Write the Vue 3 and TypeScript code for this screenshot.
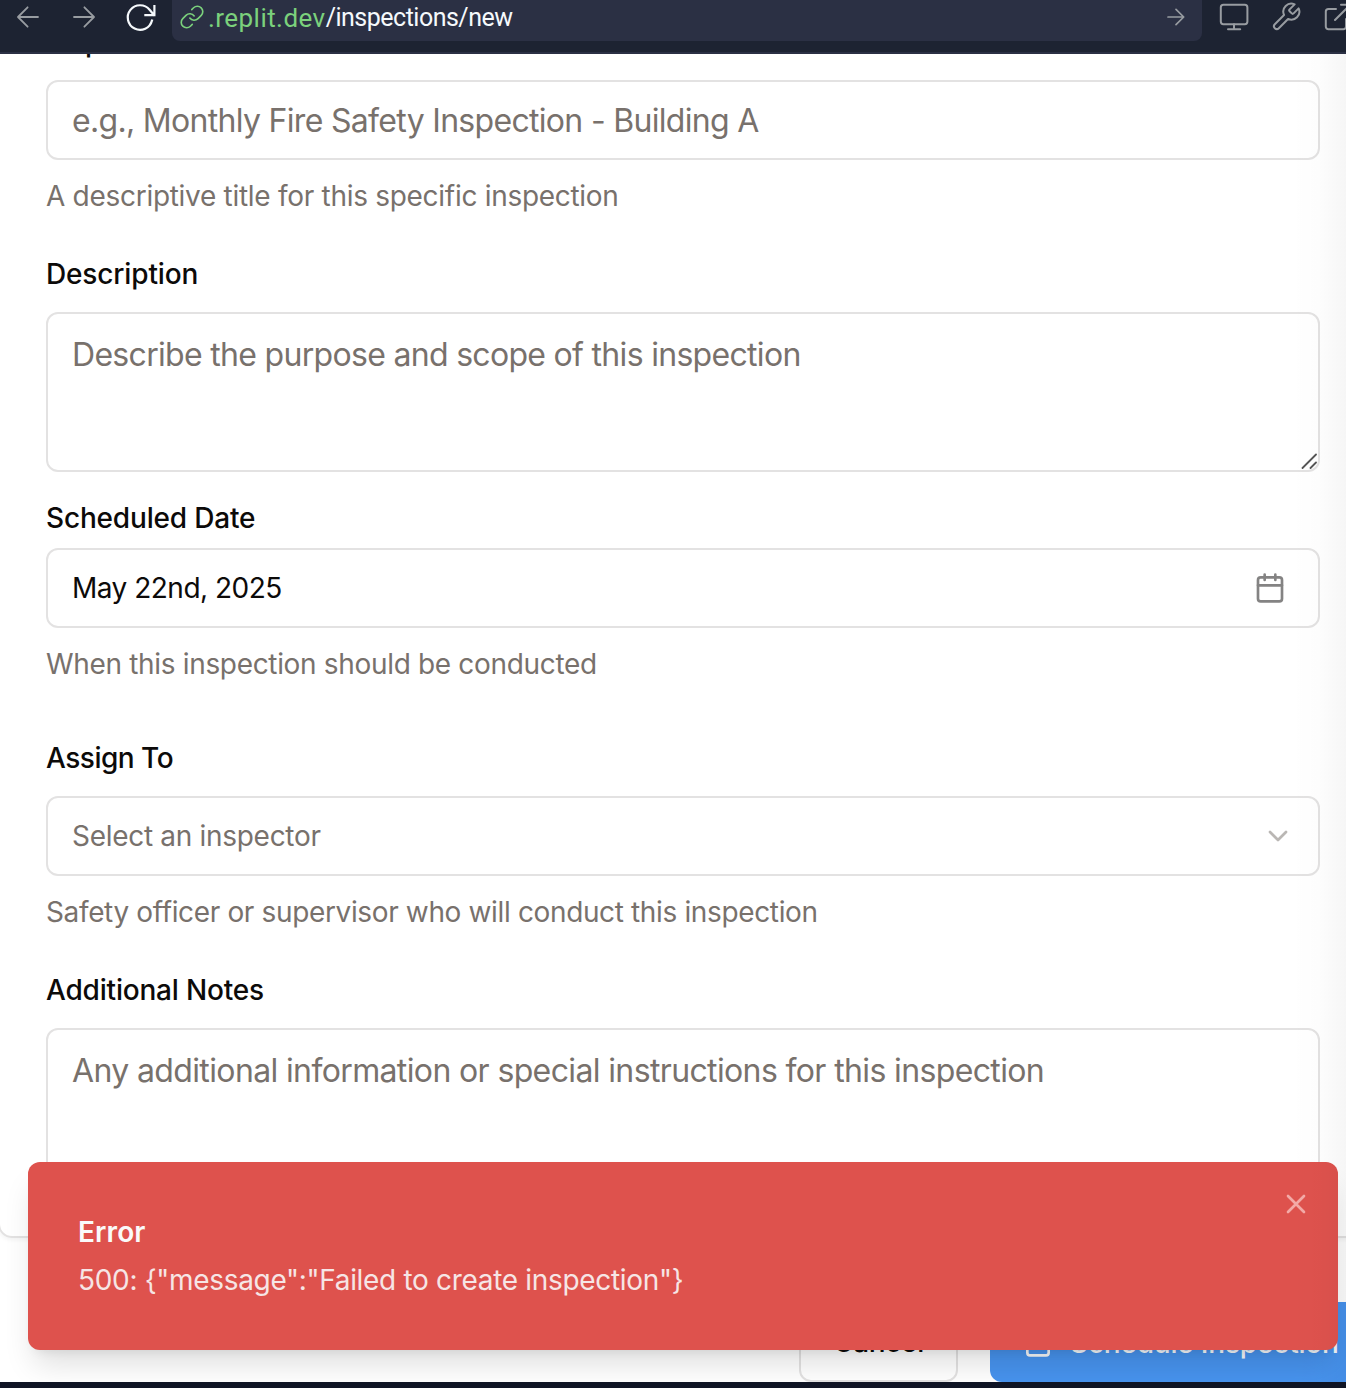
<script setup lang="ts">
import { ref } from 'vue'

interface Field {
  id: string
  label: string
  kind: 'input' | 'textarea' | 'date' | 'select'
  text: string
  hint?: string
}

const fields: Field[] = [
  {
    id: 'title',
    label: 'Inspection Title',
    kind: 'input',
    text: 'e.g., Monthly Fire Safety Inspection - Building A',
    hint: 'A descriptive title for this specific inspection',
  },
  {
    id: 'description',
    label: 'Description',
    kind: 'textarea',
    text: 'Describe the purpose and scope of this inspection',
  },
  {
    id: 'date',
    label: 'Scheduled Date',
    kind: 'date',
    text: 'May 22nd, 2025',
    hint: 'When this inspection should be conducted',
  },
  {
    id: 'assignee',
    label: 'Assign To',
    kind: 'select',
    text: 'Select an inspector',
    hint: 'Safety officer or supervisor who will conduct this inspection',
  },
  {
    id: 'notes',
    label: 'Additional Notes',
    kind: 'textarea',
    text: 'Any additional information or special instructions for this inspection',
  },
]

const toastOpen = ref(true)
const errorBody = '500: {"message":"Failed to create inspection"}'
</script>

<template>
  <div class="window">
    <header class="toolbar">
      <svg class="nav back" viewBox="0 0 24 24"><path d="M22 12H2.4M11.6 2.3L2 12l9.6 9.7" /></svg>
      <svg class="nav forward" viewBox="0 0 24 24"><path d="M2 12h19.6M12.4 2.3L22 12l-9.6 9.7" /></svg>
      <svg class="reload" viewBox="0 0 32 32">
        <path d="M28 19.5A12.3 12.3 0 1 1 25.6 8.8L30 14M30.4 5v9.1H21.4" />
      </svg>
      <div class="address">
        <svg class="link" viewBox="0 0 24 24">
          <path d="M10 13a5 5 0 0 0 7.54.54l3-3a5 5 0 0 0-7.07-7.07l-1.72 1.71" />
          <path d="M14 11a5 5 0 0 0-7.54-.54l-3 3a5 5 0 0 0 7.07 7.07l1.71-1.71" />
        </svg>
        <span class="host">.replit.dev</span><span class="path">/inspections/new</span>
        <svg class="go" viewBox="0 0 20 20"><path d="M2 10h15.4M10 2.3l7.7 7.7-7.7 7.7" /></svg>
      </div>
      <svg class="tool monitor" viewBox="0 0 32 32">
        <rect x="2.8" y="4.8" width="26.6" height="19.4" rx="2.6" />
        <path d="M16 24.2v5M10 29.2h12.2" />
      </svg>
      <svg class="tool wrench" viewBox="0 0 24 24">
        <path d="M14.7 6.3a1 1 0 0 0 0 1.4l1.6 1.6a1 1 0 0 0 1.4 0l3.77-3.77a6 6 0 0 1-7.94 7.94l-6.91 6.91a2.12 2.12 0 0 1-3-3l6.91-6.91a6 6 0 0 1 7.94-7.94l-3.76 3.76z" />
      </svg>
      <svg class="tool external" viewBox="0 0 32 32">
        <path d="M14 9H6.4a2.6 2.6 0 0 0-2.6 2.6v15a2.6 2.6 0 0 0 2.6 2.6h15a2.6 2.6 0 0 0 2.6-2.6V19M19 4.8h9.2V14M28 5L13 20" />
      </svg>
    </header>

    <main class="page">
      <section class="card">
        <div v-for="f in fields" :key="f.id" class="field" :class="f.id">
          <label class="label">{{ f.label }}</label>
          <div class="control" :class="f.kind">
            <span class="value">{{ f.text }}</span>
            <svg v-if="f.kind === 'date'" class="icon" viewBox="0 0 24 24">
              <rect x="3" y="4" width="18" height="18" rx="2" />
              <path d="M16 2v4M8 2v4M3 10h18" />
            </svg>
            <svg v-if="f.kind === 'select'" class="icon" viewBox="0 0 24 24">
              <path d="m6 9 6 6 6-6" />
            </svg>
            <svg v-if="f.kind === 'textarea'" class="grip" viewBox="0 0 16 16">
              <path d="M1.5 15L15 1.5M9.5 15L15 9.5" />
            </svg>
          </div>
          <p v-if="f.hint" class="hint">{{ f.hint }}</p>
        </div>
      </section>

      <div class="actions">
        <button class="btn cancel">Cancel</button>
        <button class="btn submit">
          <svg viewBox="0 0 24 24">
            <rect x="8" y="2" width="8" height="4" rx="1" />
            <path d="M16 4h2a2 2 0 0 1 2 2v14a2 2 0 0 1-2 2H6a2 2 0 0 1-2-2V6a2 2 0 0 1 2-2h2" />
          </svg>
          <span>Schedule Inspection</span>
        </button>
      </div>

      <div v-if="toastOpen" class="toast">
        <strong class="toast-title">Error</strong>
        <span class="toast-body">{{ errorBody }}</span>
        <svg class="close" viewBox="0 0 24 24" @click="toastOpen = false"><path d="M18 6L6 18M6 6l12 12" /></svg>
      </div>
      <div class="edge"></div>
    </main>
    <footer class="strip"></footer>
  </div>
</template>

<style>
body {
  margin: 0;
  overflow: hidden;
}
</style>

<style scoped>
.window {
  width: 1346px;
  height: 1388px;
  display: flex;
  flex-direction: column;
  overflow: hidden;
  background: #fff;
  font-family: Inter, 'Liberation Sans', sans-serif;
  color: #0c0a09;
}

svg {
  display: block;
  flex: none;
  fill: none;
  stroke: currentColor;
  stroke-width: 2;
  stroke-linecap: round;
  stroke-linejoin: round;
}

/* Browser toolbar */
.toolbar {
  box-sizing: border-box;
  height: 54px;
  flex: none;
  display: flex;
  align-items: flex-start;
  background: #1d2332;
  border-bottom: 2px solid #2b3044;
  color: #989ca1;
}
.nav {
  width: 24px;
  height: 24px;
  margin-top: 5px;
  stroke-width: 1.8;
}
.back {
  margin-left: 16px;
}
.forward {
  margin-left: 32px;
}
.reload {
  width: 32px;
  height: 32px;
  margin: 1px 0 0 28px;
  color: #f5f9fc;
  stroke-width: 2.2;
  stroke-linecap: square;
  stroke-linejoin: miter;
}
.address {
  box-sizing: border-box;
  width: 1030px;
  height: 41px;
  margin-left: 16px;
  padding: 0 16px 5px 7px;
  display: flex;
  align-items: center;
  border-radius: 0 0 8px 8px;
  background: #2b3044;
  font-family: Roboto, 'Liberation Sans', sans-serif;
  font-size: 26px;
  line-height: 32px;
  white-space: nowrap;
}
.link {
  width: 26px;
  height: 26px;
  margin-right: 3px;
  margin-top: -2px;
  color: #7bd17c;
  stroke-width: 1.5;
}
.host {
  color: #7bd17c;
  letter-spacing: 0.45px;
}
.path {
  color: #f5f9fc;
  font-size: 25px;
  letter-spacing: -0.5px;
}
.go {
  width: 20px;
  height: 20px;
  margin: -2px 0 0 auto;
  stroke-width: 1.7;
}
.tool {
  width: 32px;
  height: 32px;
}
.monitor {
  margin-left: 16px;
}
.wrench {
  margin: 1px 0 0 20px;
  stroke-width: 1.5;
}
.external {
  margin-left: 20px;
  margin-right: -40px;
}

/* Form card */
.page {
  position: relative;
  flex: 1;
  min-height: 0;
  overflow: hidden;
}
.card {
  box-sizing: border-box;
  width: 1370px;
  height: 1212px;
  margin: -28px 0 0 -2px;
  padding: 0 48px 48px 46px;
  border: 2px solid #e3e2e2;
  border-radius: 14px;
  box-shadow: 0 2px 4px rgba(0, 0, 0, 0.05);
}
.field {
  display: flex;
  flex-direction: column;
  width: 1274px;
}
.field.title,
.field.assignee {
  margin-bottom: 44px;
}
.field.date {
  margin-bottom: 60px;
}
.field.description {
  margin-bottom: 32px;
}
.label {
  font-size: 28px;
  font-weight: 500;
  line-height: 28px;
  margin-bottom: 24px;
  letter-spacing: -0.15px;
}
.date .label {
  margin-bottom: 16px;
  letter-spacing: -0.17px;
}
.assignee .label {
  letter-spacing: -0.5px;
}
.notes .label {
  letter-spacing: -0.19px;
}
.control {
  box-sizing: border-box;
  position: relative;
  height: 80px;
  display: flex;
  align-items: center;
  justify-content: space-between;
  padding: 0 24px;
  border: 2px solid #e3e2e2;
  border-radius: 12px;
  background: #fff;
  color: #78716c;
  font-size: 28px;
  line-height: 40px;
  white-space: nowrap;
}
.control.input,
.control.textarea {
  font-size: 32px;
  letter-spacing: -0.69px;
}
.control.input {
  padding-top: 2px;
}
.control.textarea {
  height: 160px;
  align-items: flex-start;
  padding-top: 21px;
}
.notes .control.textarea {
  letter-spacing: -0.63px;
}
.control.date {
  color: #0c0a09;
  padding-right: 32px;
  letter-spacing: -0.5px;
}
.control.select {
  letter-spacing: -0.3px;
}
.icon {
  width: 32px;
  height: 32px;
  opacity: 0.5;
}
.grip {
  position: absolute;
  right: 1px;
  bottom: 1px;
  width: 16px;
  height: 16px;
  color: #555;
  stroke-width: 1.8;
}
.hint {
  margin: 16px 0 0;
  color: #78716c;
  font-size: 28px;
  line-height: 40px;
  letter-spacing: -0.29px;
  white-space: nowrap;
}
.date .hint {
  letter-spacing: -0.33px;
}
.assignee .hint {
  letter-spacing: -0.36px;
}

/* Footer buttons */
.actions {
  display: flex;
  gap: 32px;
  margin: 64px 0 0 799px;
  width: 600px;
}
.btn {
  box-sizing: border-box;
  height: 80px;
  flex: none;
  display: flex;
  align-items: center;
  justify-content: center;
  gap: 16px;
  border: 0;
  border-radius: 12px;
  font: 500 28px/40px Inter, 'Liberation Sans', sans-serif;
  white-space: nowrap;
}
.cancel {
  width: 159px;
  border: 2px solid #e3e2e2;
  background: #fff;
  color: #0c0a09;
  letter-spacing: -0.38px;
}
.submit {
  width: 380px;
  justify-content: flex-start;
  padding: 2px 32px 0;
  background: #4793ee;
  color: #f8fafc;
  letter-spacing: -0.2px;
}
.submit svg {
  width: 32px;
  height: 32px;
  margin-top: -2px;
}

/* Error toast */
.toast {
  position: absolute;
  left: 28px;
  top: 1108px;
  width: 1310px;
  height: 188px;
  box-sizing: border-box;
  display: flex;
  flex-direction: column;
  padding: 50px;
  gap: 8px;
  border-radius: 12px;
  background: #de524d;
  color: #fafafa;
  font-size: 28px;
  line-height: 40px;
  box-shadow: 0 20px 30px -6px rgba(0, 0, 0, 0.13), 0 8px 12px -8px rgba(0, 0, 0, 0.1);
}
.toast-title {
  font-weight: 600;
  letter-spacing: 0.1px;
}
.toast-body {
  opacity: 0.88;
  letter-spacing: -0.32px;
}
.close {
  position: absolute;
  top: 26px;
  right: 26px;
  width: 32px;
  height: 32px;
  color: #f3aaa7;
}
.edge {
  position: absolute;
  top: 0;
  right: 0;
  bottom: 0;
  width: 56px;
  pointer-events: none;
  background: linear-gradient(to right, transparent, rgba(0, 0, 0, 0.009) 50%, rgba(0, 0, 0, 0.036));
}
.strip {
  height: 6px;
  flex: none;
  background: #0f1424;
}
</style>
